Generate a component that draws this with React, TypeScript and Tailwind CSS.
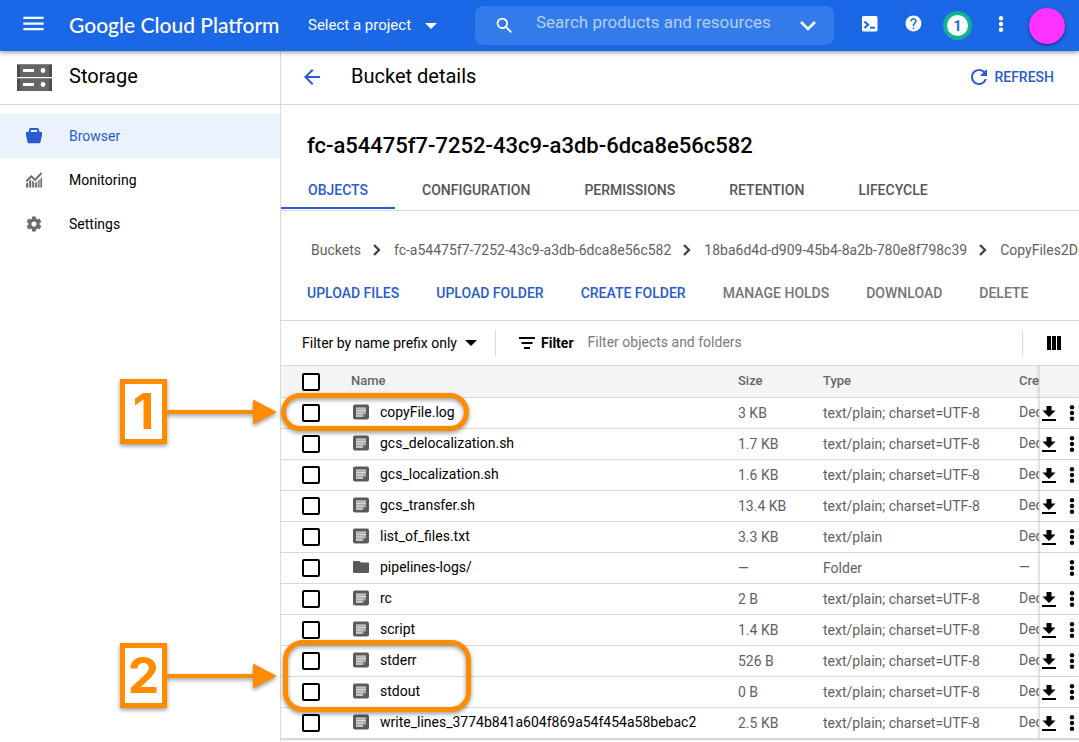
import type { ReactNode } from "react";

type IconProps = { className?: string };

function Icon({ d, className }: { d: string } & IconProps) {
  return (
    <svg viewBox="0 0 24 24" fill="currentColor" aria-hidden="true" className={className}>
      <path d={d} />
    </svg>
  );
}

const paths = {
  menu: "M3 18h18v-2H3v2zm0-5h18v-2H3v2zm0-7v2h18V6H3z",
  search:
    "M15.5 14h-.79l-.28-.27A6.471 6.471 0 0 0 16 9.5 6.5 6.5 0 1 0 9.5 16c1.61 0 3.09-.59 4.23-1.57l.27.28v.79l5 4.99L20.49 19l-4.99-5zm-6 0C7.01 14 5 11.99 5 9.5S7.01 5 9.5 5 14 7.01 14 9.5 11.99 14 9.5 14z",
  help: "M12 2C6.48 2 2 6.48 2 12s4.48 10 10 10 10-4.48 10-10S17.52 2 12 2zm1 17h-2v-2h2v2zm2.07-7.75l-.9.92C13.45 12.9 13 13.5 13 15h-2v-.5c0-1.1.45-2.1 1.17-2.83l1.24-1.26c.37-.36.59-.86.59-1.41 0-1.1-.9-2-2-2s-2 .9-2 2H8c0-2.21 1.79-4 4-4s4 1.79 4 4c0 .88-.36 1.68-.93 2.25z",
  arrowBack: "M20 11H7.83l5.59-5.59L12 4l-8 8 8 8 1.41-1.41L7.83 13H20v-2z",
  refresh:
    "M17.65 6.35A7.958 7.958 0 0 0 12 4c-4.42 0-7.99 3.58-8 8s3.57 8 8 8c3.73 0 6.84-2.55 7.73-6h-2.08A5.99 5.99 0 0 1 12 18c-3.31 0-6-2.69-6-6s2.69-6 6-6c1.66 0 3.14.69 4.22 1.78L13 11h7V4l-2.35 2.35z",
  settings:
    "M19.43 12.98c.04-.32.07-.64.07-.98s-.03-.66-.07-.98l2.11-1.65c.19-.15.24-.42.12-.64l-2-3.46c-.12-.22-.39-.3-.61-.22l-2.49 1c-.52-.4-1.08-.73-1.69-.98l-.38-2.65A.488.488 0 0 0 14 2h-4c-.25 0-.46.18-.49.42l-.38 2.65c-.61.25-1.17.59-1.69.98l-2.49-1c-.23-.09-.49 0-.61.22l-2 3.46c-.13.22-.07.49.12.64l2.11 1.65c-.04.32-.07.65-.07.98s.03.66.07.98l-2.11 1.65c-.19.15-.24.42-.12.64l2 3.46c.12.22.39.3.61.22l2.49-1c.52.4 1.08.73 1.69.98l.38 2.65c.03.24.24.42.49.42h4c.25 0 .46-.18.49-.42l.38-2.65c.61-.25 1.17-.59 1.69-.98l2.49 1c.23.09.49 0 .61-.22l2-3.46c.12-.22.07-.49-.12-.64l-2.11-1.65zM12 15.5c-1.93 0-3.5-1.57-3.5-3.5s1.57-3.5 3.5-3.5 3.5 1.57 3.5 3.5-1.57 3.5-3.5 3.5z",
};

function Caret({ className }: IconProps) {
  return (
    <svg viewBox="0 0 12 6" fill="currentColor" aria-hidden="true" className={className}>
      <path d="M0 0h12L6 6z" />
    </svg>
  );
}

function MoreDots({ className }: IconProps) {
  return (
    <svg viewBox="0 0 6 16" fill="currentColor" aria-hidden="true" className={className}>
      <circle cx="3" cy="2.2" r="2.2" />
      <circle cx="3" cy="8" r="2.2" />
      <circle cx="3" cy="13.8" r="2.2" />
    </svg>
  );
}

function ShellIcon() {
  return (
    <svg viewBox="0 0 16 16" aria-hidden="true" className="size-4">
      <rect width="15.500" height="15.500" rx="1.5" fill="#fff" />
      <path d="M2.500 5.500 6 8.800 2.500 12" fill="none" stroke="#1a68e6" strokeWidth="2.200" />
      <path d="M8 11.700h5" stroke="#1a68e6" strokeWidth="2" />
    </svg>
  );
}

function StorageIcon() {
  return (
    <svg viewBox="0 0 35 27" aria-hidden="true" className="h-[27px] w-[35px]">
      <path fill="#666" d="M0 0h35v13H0zM0 14h35v13H0z" />
      <path fill="#4d4d4d" d="M0 0h3v13H0zM32 0h3v13h-3zM0 14h3v13H0zM32 14h3v13h-3z" />
      <path fill="#858585" d="M0 0h35v1H0zM0 14h35v1H0z" />
      <path fill="#fff" d="M6 5h11v3H6zM6 19h11v3H6z" />
      <circle cx="26" cy="6.5" r="2.4" fill="#fff" />
      <circle cx="26" cy="20.5" r="2.4" fill="#fff" />
    </svg>
  );
}

function BucketIcon() {
  return (
    <svg viewBox="0 0 16 16" fill="currentColor" aria-hidden="true" className="size-4">
      <path
        fillRule="evenodd"
        d="M4.500 0h7A1.500 1.500 0 0 1 13 1.500L13.500 4H16v3l-1.500 7a1.600 1.600 0 0 1-1.500 1.300H3A1.600 1.600 0 0 1 1.500 14L0 7V4h2.500L3 1.500A1.500 1.500 0 0 1 4.500 0zM5 2l-.3 2h6.600L11 2z"
      />
    </svg>
  );
}

function MonitoringIcon() {
  return (
    <svg viewBox="0 0 16 16" aria-hidden="true" className="size-4">
      <path
        fill="currentColor"
        d="M0 12l2.200-2.200V15.500H0zM3.200 9l2-1.800v8.300h-2zM6.200 8.200l2 2v5.300h-2zM9.200 11l2-1.800v6.300h-2zM12.200 8.600l1.400-1.300v8.200h-1.400zM14.400 6.700 16 5.200V15.500h-1.600z"
      />
      <path d="M.3 9.300 5.300 4.300l3.700 3.700L15.700 1" fill="none" stroke="currentColor" strokeWidth="1.900" />
    </svg>
  );
}

function FileIcon() {
  return (
    <svg viewBox="0 0 16 16" aria-hidden="true" className="size-4">
      <rect width="16" height="15" y=".5" rx="2" fill="#5a5a5a" />
      <path fill="#aaa" d="M3 4h10v6.500h-2.500V13H3z" />
      <path fill="#ddd" d="M3 3.500h10v1H3zM3 6h10v1H3z" />
      <path fill="#ddd" d="M3 8.500h7v1H3zM3 11.500h6v1H3z" />
    </svg>
  );
}

function FolderIcon() {
  return (
    <svg viewBox="0 0 16 16" fill="#5a5a5a" aria-hidden="true" className="size-4">
      <path d="M0 3a1 1 0 0 1 1-1h5.500l1.500 1.500h7a1 1 0 0 1 1 1V13a1 1 0 0 1-1 1H1a1 1 0 0 1-1-1z" />
    </svg>
  );
}

function DownloadIcon() {
  return (
    <svg viewBox="0 0 14 15" fill="currentColor" aria-hidden="true" className="h-[15px] w-[14px]">
      <path d="M4.500 0h5v4.500H13.500L7 11 .5 4.500h4zM0 13h14v2H0z" />
    </svg>
  );
}

const nav: { label: string; icon: ReactNode; active?: boolean }[] = [
  { label: "Browser", icon: <BucketIcon />, active: true },
  { label: "Monitoring", icon: <MonitoringIcon /> },
  { label: "Settings", icon: <Icon d={paths.settings} className="size-[18px]" /> },
];

const tabs = ["OBJECTS", "CONFIGURATION", "PERMISSIONS", "RETENTION", "LIFECYCLE"];

const crumbs = [
  "Buckets",
  "fc-a54475f7-7252-43c9-a3db-6dca8e56c582",
  "18ba6d4d-d909-45b4-8a2b-780e8f798c39",
  "CopyFiles2Directory",
];

const actions = [
  { label: "UPLOAD FILES", enabled: true },
  { label: "UPLOAD FOLDER", enabled: true },
  { label: "CREATE FOLDER", enabled: true },
  { label: "MANAGE HOLDS", enabled: false },
  { label: "DOWNLOAD", enabled: false },
  { label: "DELETE", enabled: false },
];

const utf8 = "text/plain; charset=UTF-8";
const rows = [
  { name: "copyFile.log", size: "3 KB", type: utf8 },
  { name: "gcs_delocalization.sh", size: "1.7 KB", type: utf8 },
  { name: "gcs_localization.sh", size: "1.6 KB", type: utf8 },
  { name: "gcs_transfer.sh", size: "13.4 KB", type: utf8 },
  { name: "list_of_files.txt", size: "3.3 KB", type: "text/plain" },
  { name: "pipelines-logs/", size: "—", type: "Folder" },
  { name: "rc", size: "2 B", type: utf8 },
  { name: "script", size: "1.4 KB", type: utf8 },
  { name: "stderr", size: "526 B", type: utf8 },
  { name: "stdout", size: "0 B", type: utf8 },
  { name: "write_lines_3774b841a604f869a54f454a58bebac2", size: "2.5 KB", type: utf8 },
];

function Header() {
  return (
    <header className="relative z-10 flex h-[51px] items-center bg-[#1a68e6] pr-3.5 text-white shadow-[0_1px_5px_rgba(0,0,0,0.5)]">
      <button aria-label="Main menu" className="ml-5 shrink-0 pb-1">
        <Icon d={paths.menu} className="size-[27px]" />
      </button>
      <a href="#" className="ml-[22px] w-[239px] shrink-0 pb-0.5 font-[Lato] text-[21px] leading-6 font-medium whitespace-nowrap">
        Google Cloud Platform
      </a>
      <button className="flex w-[167px] shrink-0 items-center gap-3.5 text-[15px] whitespace-nowrap">
        Select a project
        <Caret className="h-1.5 w-3" />
      </button>
      <div className="flex h-[39px] min-w-0 flex-1 items-center rounded-lg bg-[#347bea] px-4">
        <Icon d={paths.search} className="ml-[3px] size-[21px] shrink-0" />
        <input
          type="search"
          aria-label="Search products and resources"
          placeholder="Search products and resources"
          className="ml-[21px] min-w-0 flex-1 bg-transparent pb-1.5 text-[17px] text-white outline-none placeholder:text-[#b3cff8]"
        />
        <button aria-label="Expand search">
          <svg viewBox="0 0 20 20" aria-hidden="true" className="size-5">
            <path d="M3 6l7 7 7-7" fill="none" stroke="#fff" strokeWidth="2.500" />
          </svg>
        </button>
      </div>
      <div className="ml-7 flex shrink-0 items-center">
        <button aria-label="Activate Cloud Shell" className="pb-1">
          <ShellIcon />
        </button>
        <button aria-label="Help" className="ml-[26px] pb-1">
          <Icon d={paths.help} className="size-[19px]" />
        </button>
        <button
          aria-label="1 notification"
          className="ml-5 flex size-[29px] items-center justify-center rounded-full border-4 border-[#12b097] bg-white text-sm font-bold text-[#1a68e6]"
        >
          1
        </button>
        <button aria-label="More options" className="ml-[26px] pb-1">
          <MoreDots className="h-4 w-1.5" />
        </button>
        <button
          aria-label="Account"
          className="ml-[25px] size-9 rounded-full bg-[#ff33ff] shadow-[0_1px_3px_rgba(0,0,0,0.6)]"
        />
      </div>
    </header>
  );
}

function Sidebar() {
  return (
    <aside className="w-[281px] shrink-0 border-r border-[#dadada]">
      <div className="flex h-[54px] items-center border-b border-[#dadada] pl-[17px]">
        <StorageIcon />
        <h2 className="ml-[17px] pb-1 text-xl">Storage</h2>
      </div>
      <nav className="pt-[9px]">
        {nav.map((item) => (
          <a
            key={item.label}
            href="#"
            className={`flex h-11 items-center text-sm ${item.active ? "bg-[#ebf2fd] text-[#2a5bd0]" : "text-black"}`}
          >
            <span className={`mr-px flex w-[68px] justify-center ${item.active ? "" : "text-[#6b6b6b]"}`}>
              {item.icon}
            </span>
            {item.label}
          </a>
        ))}
      </nav>
    </aside>
  );
}

function Checkbox({ label }: { label: string }) {
  return (
    <input
      type="checkbox"
      aria-label={label}
      className="block size-[18px] appearance-none rounded-xs border-2 border-black bg-white checked:bg-black"
    />
  );
}

function ObjectsTable() {
  const edge = "border-l border-[#c8c8c8] shadow-[-2px_0_2px_rgba(0,0,0,0.08)]";
  return (
    <table className="w-full table-fixed border-separate border-spacing-0 text-left text-sm">
      <colgroup>
        <col className="w-[70px]" />
        <col />
        <col className="w-[85px]" />
        <col className="w-[196px]" />
        <col className="w-5" />
        <col className="w-10" />
      </colgroup>
      <thead className="bg-[#f4f4f4] text-[13px] text-[#666]">
        <tr className="h-8 *:border-b *:border-[#dadada] *:p-0 *:font-medium">
          <th className="pl-[21px]!">
            <Checkbox label="Select all objects" />
          </th>
          <th>Name</th>
          <th>Size</th>
          <th>Type</th>
          <th className="overflow-hidden whitespace-nowrap">Created</th>
          <th className={`relative bg-[#f4f4f4] ${edge}`} aria-label="Actions" />
        </tr>
      </thead>
      <tbody className="text-[#5f5f5f]">
        {rows.map((row) => {
          const folder = row.type === "Folder";
          return (
            <tr key={row.name} className="h-[31px] *:border-b *:border-[#dadada] *:p-0">
              <td className="pl-[21px]!">
                <Checkbox label={`Select ${row.name}`} />
              </td>
              <td>
                <a href="#" className="flex items-center gap-[11px] pb-0.5 pl-0.5 whitespace-nowrap text-black">
                  {folder ? <FolderIcon /> : <FileIcon />}
                  {row.name}
                </a>
              </td>
              <td>{row.size}</td>
              <td className="whitespace-nowrap">{row.type}</td>
              <td className="overflow-hidden pb-0.5! whitespace-nowrap">{folder ? "—" : "Dec 15"}</td>
              <td className={`relative bg-white text-black ${edge}`}>
                <div className="flex items-center justify-end gap-[13px] pr-1">
                  {!folder && (
                    <button aria-label={`Download ${row.name}`}>
                      <DownloadIcon />
                    </button>
                  )}
                  <button aria-label={`More actions for ${row.name}`}>
                    <MoreDots className="h-4 w-1.5" />
                  </button>
                </div>
              </td>
            </tr>
          );
        })}
      </tbody>
    </table>
  );
}

function Main() {
  return (
    <main className="min-w-0 flex-1 overflow-hidden">
      <div className="flex h-[54px] items-center border-b border-[#dadada] pr-[25px] pb-0.5 pl-[19px]">
        <button aria-label="Back" className="text-[#2a5bd0]">
          <Icon d={paths.arrowBack} className="size-6" />
        </button>
        <h1 className="ml-[27px] pb-0.5 text-xl">Bucket details</h1>
        <button className="ml-auto flex items-center gap-[3px] text-sm font-medium text-[#2a5bd0]">
          <Icon d={paths.refresh} className="size-6" />
          REFRESH
        </button>
      </div>

      <h2 className="pt-[25px] pl-[26px] text-[22px] leading-8 font-medium">fc-a54475f7-7252-43c9-a3db-6dca8e56c582</h2>

      <div role="tablist" className="mt-2 flex h-[41px] border-b border-[#dadada] text-sm font-medium">
        {tabs.map((tab, i) => (
          <button
            key={tab}
            role="tab"
            aria-selected={i === 0}
            className={`mb-px border-b-2 px-[27px] pt-0.5 ${i === 0 ? "border-[#2a5bd0] text-[#2a5bd0]" : "border-transparent text-[#555]"}`}
          >
            {tab}
          </button>
        ))}
      </div>

      <nav aria-label="Breadcrumb" className="mt-[27px] pl-[30px]">
        <ol className="flex items-center text-sm leading-6 whitespace-nowrap text-[#5f5f5f]">
          {crumbs.map((crumb, i) => (
            <li key={crumb} className="flex shrink-0 items-center">
              {i > 0 && (
                <svg viewBox="0 0 8 12" aria-hidden="true" className="mr-[13px] ml-3 h-3 w-2">
                  <path d="M1 1l5 5-5 5" fill="none" stroke="#444" strokeWidth="2.400" />
                </svg>
              )}
              <a href="#">{crumb}</a>
            </li>
          ))}
        </ol>
      </nav>

      <div className="flex gap-[37px] pt-5 pb-4 pl-[26px] text-sm leading-[22px] font-medium whitespace-nowrap">
        {actions.map((a) => (
          <button key={a.label} disabled={!a.enabled} className={a.enabled ? "text-[#2a5bd0]" : "text-[#757575]"}>
            {a.label}
          </button>
        ))}
      </div>

      <div className="flex h-[46px] items-center border-y border-[#dadada] pl-[21px] text-sm">
        <div className="relative flex items-center">
          <select aria-label="Filter mode" className="appearance-none bg-transparent pr-5 outline-none">
            <option>Filter by name prefix only</option>
          </select>
          <Caret className="pointer-events-none absolute right-0 h-1.5 w-3" />
        </div>
        <div className="ml-[18px] h-[26px] w-px bg-[#dadada]" />
        <svg viewBox="0 0 16 12" aria-hidden="true" className="ml-[23px] h-3 w-4">
          <path d="M0 0h16v2H0zM2.500 5h11v2h-11zM5 10h6v2H5z" />
        </svg>
        <label htmlFor="filter" className="ml-1.5 font-bold">
          Filter
        </label>
        <input
          id="filter"
          placeholder="Filter objects and folders"
          className="ml-3.5 min-w-0 flex-1 bg-transparent pb-0.5 outline-none placeholder:text-[#7a7a7a]"
        />
        <div className="h-[26px] w-px bg-[#dadada]" />
        <button aria-label="Column display options" className="mr-[18px] ml-6">
          <svg viewBox="0 0 14 14" aria-hidden="true" className="size-3.5">
            <path d="M0 0h4v14H0zM5 0h4v14H5zM10 0h4v14h-4z" />
          </svg>
        </button>
      </div>

      <ObjectsTable />
      <div className="h-1 border-t border-[#dadada] bg-[#f7f7f7]" />
    </main>
  );
}

function Callout({ label }: { label: string }) {
  return (
    <div className="flex items-center drop-shadow-[0_2px_2px_rgba(0,0,0,0.4)]">
      <span className="flex h-[65px] w-[47px] items-center justify-center border-5 border-[#ff8c00] bg-white font-[Inter] text-[50px] font-bold text-[#ff8c00]">
        {label}
      </span>
      <svg viewBox="0 0 110 26" fill="#ff8c00" aria-hidden="true" className="h-[26px] w-[110px]">
        <path d="M0 11h86V.5L110 13 86 25.500V15H0z" />
      </svg>
    </div>
  );
}

export default function App() {
  return (
    <div className="relative overflow-hidden bg-white font-['Roboto',sans-serif] text-black">
      <Header />
      <div className="flex">
        <Sidebar />
        <Main />
      </div>
      <div className="pointer-events-none absolute top-[379px] left-[120px]">
        <Callout label="1" />
      </div>
      <div className="pointer-events-none absolute top-[643px] left-[120px]">
        <Callout label="2" />
      </div>
      <div className="pointer-events-none absolute top-[393px] left-[281px] h-[38px] w-[188px] rounded-[19px] border-5 border-[#ff8c00] drop-shadow-[0_2px_2px_rgba(0,0,0,0.4)]" />
      <div className="pointer-events-none absolute top-[640px] left-[283px] h-[72px] w-[188px] rounded-[20px] border-5 border-[#ff8c00] drop-shadow-[0_2px_2px_rgba(0,0,0,0.4)]" />
    </div>
  );
}
